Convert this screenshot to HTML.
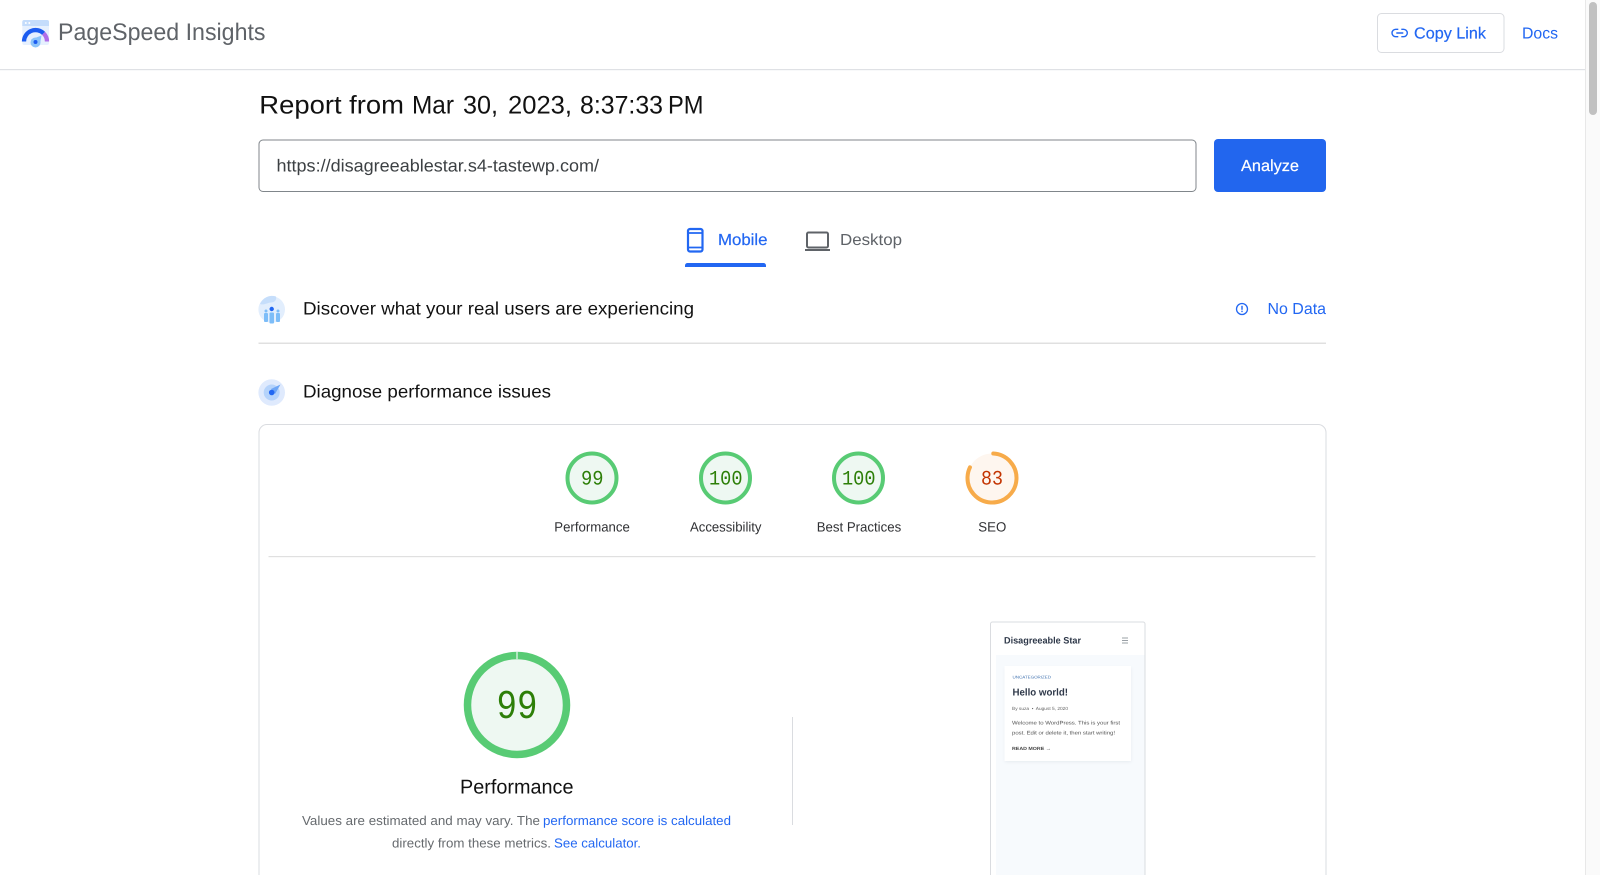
<!DOCTYPE html>
<html lang="en"><head><meta charset="utf-8"><title>PageSpeed Insights</title>
<style>
html,body{margin:0;padding:0;width:1600px;height:875px;overflow:hidden;background:#fff}
svg{display:block;position:absolute;left:0;top:0;filter:blur(.25px)}
text{font-family:"Liberation Sans",sans-serif;white-space:pre}
.m{font-family:"Liberation Mono",monospace}
.b{fill:#2267f2}
.w{stroke:currentColor;stroke-width:.2px}
</style></head><body>
<svg width="1600" height="875" viewBox="0 0 1600 875" xmlns="http://www.w3.org/2000/svg" text-rendering="geometricPrecision">
<defs>
<filter id="s" x="-10%" y="-10%" width="120%" height="120%"><feGaussianBlur stdDeviation="1.500"/></filter>
<filter id="tb" x="-5%" y="-5%" width="110%" height="110%"><feGaussianBlur stdDeviation=".3"/></filter>
</defs>
<!-- scrollbar -->
<rect x="1585" y="0" width="15" height="875" fill="#fafafa"/>
<rect x="1585" y="0" width="1" height="875" fill="#e8e8e8"/>
<rect x="1589" y="2" width="8" height="113" rx="4" fill="#c1c1c1"/>
<!-- header -->
<rect x="0" y="69" width="1585" height="1.200" fill="#dfe1e5"/>
<rect x="22.300" y="20" width="26.700" height="25" rx="2" fill="#e6f0fe"/>
<path d="M22.300 22a2 2 0 0 1 2-2h22.700a2 2 0 0 1 2 2v4H22.300z" fill="#c4dcfb"/>
<circle cx="25.800" cy="23" r="1" fill="#fff"/><circle cx="29.300" cy="23" r="1" fill="#fff"/>
<path d="M24 41.500A11.500 11.500 0 0 1 43.600 33.400" fill="none" stroke="#1c5cf0" stroke-width="4.300"/>
<path d="M43.600 33.400A11.500 11.500 0 0 1 47 41.500" fill="none" stroke="#b06ee8" stroke-width="4.300"/>
<path d="M41.500 35.500L39.800 45 31 39.500z" fill="#8cc4fa"/>
<circle cx="35.500" cy="42.500" r="5" fill="#8cc4fa"/><circle cx="35.500" cy="42" r="2" fill="#1c5cf0"/>
<text x="58" y="40" font-size="24" fill="#5f6368" textLength="207.500" lengthAdjust="spacingAndGlyphs">PageSpeed Insights</text>
<rect x="1377.500" y="13.500" width="126.500" height="39" rx="4" fill="#fff" stroke="#dadce0"/>
<path d="M1398.300 29.300h-2.600a3.700 3.700 0 0 0 0 7.400h2.600M1401.300 29.300h2.300a3.700 3.700 0 0 1 0 7.400h-2.300M1396.300 33h7" fill="none" stroke="#2267f2" stroke-width="1.400"/>
<text class="b w" x="1414" y="38.300" font-size="16" textLength="72" lengthAdjust="spacingAndGlyphs" color="#2267f2">Copy Link</text>
<text class="b" x="1522" y="38.300" font-size="16" textLength="36" lengthAdjust="spacingAndGlyphs">Docs</text>
<!-- title and input -->
<g font-size="25.500" fill="#111">
<text x="259.300" y="113.500" textLength="144.700" lengthAdjust="spacingAndGlyphs">Report from</text>
<text x="412" y="113.500" textLength="42" lengthAdjust="spacingAndGlyphs">Mar</text>
<text x="463" y="113.500" textLength="35" lengthAdjust="spacingAndGlyphs">30,</text>
<text x="508" y="113.500" textLength="64" lengthAdjust="spacingAndGlyphs">2023,</text>
<text x="580" y="113.500" textLength="83" lengthAdjust="spacingAndGlyphs">8:37:33</text>
<text x="668" y="113.500" textLength="35.500" lengthAdjust="spacingAndGlyphs">PM</text>
</g>
<rect x="259" y="140" width="937" height="51.500" rx="4" fill="#fff" stroke="#80868b"/>
<text x="276.500" y="171.500" font-size="17.500" fill="#3c4043" textLength="322.500" lengthAdjust="spacingAndGlyphs">https://disagreeablestar.s4-tastewp.com/</text>
<rect x="1214" y="139" width="112" height="53" rx="4" fill="#2266ee"/>
<text class="w" x="1241" y="171" font-size="16" fill="#fff" color="#fff" textLength="58" lengthAdjust="spacingAndGlyphs">Analyze</text>
<!-- tabs -->
<rect x="688" y="229" width="14.500" height="22.500" rx="2" fill="none" stroke="#2267f2" stroke-width="2.200"/>
<path d="M688 233h14.500M688 247.500h14.500" stroke="#2267f2" stroke-width="1.800"/>
<text class="b w" x="718" y="245" font-size="16" color="#2267f2" textLength="49.500" lengthAdjust="spacingAndGlyphs">Mobile</text>
<path d="M685 267v-1.500a2.500 2.500 0 0 1 2.500-2.500h76a2.500 2.500 0 0 1 2.500 2.500v1.500z" fill="#2267f2"/>
<rect x="807" y="232.500" width="21" height="15" rx="1.500" fill="none" stroke="#5f6368" stroke-width="2"/>
<rect x="805" y="249" width="25" height="2" fill="#5f6368"/>
<text x="840" y="245" font-size="16" fill="#5f6368" textLength="62" lengthAdjust="spacingAndGlyphs">Desktop</text>
<!-- discover -->
<circle cx="271.700" cy="309.500" r="13.300" fill="#e2eefd"/>
<path d="M260 304a13 13 0 0 1 16-7.500c1 4-2 6-5 6s-7 3-11 1.500z" fill="#c6defb"/>
<rect x="264" y="313" width="4" height="9" rx="1" fill="#7dbdf8"/>
<rect x="269.500" y="312.500" width="4.500" height="11" rx="1" fill="#7dbdf8"/>
<rect x="276" y="313" width="4" height="9" rx="1" fill="#7dbdf8"/>
<circle cx="266" cy="311" r="1.500" fill="#7dbdf8"/><circle cx="278" cy="311" r="1.500" fill="#7dbdf8"/>
<circle cx="271.700" cy="309" r="2.200" fill="#2267f2"/>
<text x="303" y="314.500" font-size="18" fill="#111" textLength="391" lengthAdjust="spacingAndGlyphs">Discover what your real users are experiencing</text>
<circle cx="1242" cy="309" r="5.500" fill="none" stroke="#2267f2" stroke-width="1.300"/>
<rect x="1241.300" y="305.800" width="1.400" height="4" fill="#2267f2"/><rect x="1241.300" y="310.700" width="1.400" height="1.400" fill="#2267f2"/>
<text class="b" x="1267.500" y="314" font-size="16" textLength="58.500" lengthAdjust="spacingAndGlyphs">No Data</text>
<rect x="258.500" y="342.500" width="1067.500" height="1.500" fill="#e0e0e0"/>
<!-- diagnose -->
<circle cx="271.700" cy="392.500" r="13.300" fill="#dfeafd"/>
<circle cx="271.700" cy="392.500" r="8" fill="#b5d3fb"/>
<path d="M271 389L280.500 384.500 275 394z" fill="#6ea6f6"/>
<circle cx="271.700" cy="392.500" r="2.800" fill="#2267f2"/>
<text x="303" y="397.500" font-size="18" fill="#111" textLength="248" lengthAdjust="spacingAndGlyphs">Diagnose performance issues</text>
<!-- card -->
<rect x="259" y="424.500" width="1067" height="470" rx="8" fill="#fff" stroke="#dadce0"/>
<rect x="268.500" y="556" width="1047" height="1.200" fill="#e0e0e0"/>
<!-- gauges -->
<g stroke-width="4">
<circle cx="592" cy="478" r="24.500" fill="#eef8f2" stroke="#58cb74"/>
<circle cx="725.500" cy="478" r="24.500" fill="#eef8f2" stroke="#58cb74"/>
<circle cx="858.500" cy="478" r="24.500" fill="#eef8f2" stroke="#58cb74"/>
<circle cx="992" cy="478" r="24.500" fill="#fef6ef"/>
<circle cx="992" cy="478" r="24.500" fill="none" stroke="#f7ab4a" stroke-linecap="round" stroke-dasharray="125 200" transform="rotate(-87 992 478)"/>
</g>
<g font-size="20.500" fill="#2d7f08">
<text class="m" x="581" y="484.500" textLength="22.500" lengthAdjust="spacingAndGlyphs">99</text>
<text class="m" x="709" y="484.500" textLength="33.500" lengthAdjust="spacingAndGlyphs">100</text>
<text class="m" x="842" y="484.500" textLength="33.500" lengthAdjust="spacingAndGlyphs">100</text>
<text class="m" x="981" y="484.500" fill="#c33300" textLength="22" lengthAdjust="spacingAndGlyphs">83</text>
</g>
<g font-size="13.500" fill="#303134">
<text x="554.300" y="531.300" textLength="75.500" lengthAdjust="spacingAndGlyphs">Performance</text>
<text x="690" y="531.300" textLength="71.500" lengthAdjust="spacingAndGlyphs">Accessibility</text>
<text x="816.700" y="531.300" textLength="84.500" lengthAdjust="spacingAndGlyphs">Best Practices</text>
<text x="978.300" y="531.300" textLength="28" lengthAdjust="spacingAndGlyphs">SEO</text>
</g>
<!-- big gauge -->
<circle cx="517" cy="705" r="49.500" fill="#eef8f2" stroke="#58cb74" stroke-width="7.500"/>
<rect x="516.400" y="651" width="1.200" height="8" fill="#eef8f2"/>
<text class="m" x="496.500" y="718" font-size="41" fill="#2d7f08" textLength="41" lengthAdjust="spacingAndGlyphs">99</text>
<text x="460" y="793.500" font-size="20" fill="#111" textLength="113.500" lengthAdjust="spacingAndGlyphs">Performance</text>
<g font-size="13">
<text x="302" y="825" fill="#666a6e" textLength="238" lengthAdjust="spacingAndGlyphs">Values are estimated and may vary. The</text>
<text class="b" x="543" y="825" textLength="188" lengthAdjust="spacingAndGlyphs">performance score is calculated</text>
<text x="392" y="847.300" fill="#666a6e" textLength="159" lengthAdjust="spacingAndGlyphs">directly from these metrics.</text>
<text class="b" x="554" y="847.300" textLength="87" lengthAdjust="spacingAndGlyphs">See calculator.</text>
</g>
<rect x="792" y="717" width="1" height="108" fill="#dadce0"/>
<!-- thumbnail -->
<rect x="990.500" y="622" width="154.500" height="270" rx="2" fill="#fff" stroke="#dadce0"/>
<rect x="996" y="655" width="148.500" height="220" fill="#f7fafd"/>
<rect x="1005" y="668" width="126" height="94" fill="#e6ebf0" filter="url(#s)"/>
<rect x="1004.500" y="666" width="126.500" height="95" fill="#fff"/>
<g filter="url(#tb)">
<text x="1004" y="643.500" font-size="9.300" font-weight="700" fill="#2d3748" textLength="77" lengthAdjust="spacingAndGlyphs">Disagreeable Star</text>
<path d="M1122 638h6M1122 640.500h6M1122 643h6" stroke="#9aa0a6" stroke-width="1"/>
<text x="1012.500" y="678.500" font-size="4" fill="#3d6fae" textLength="38.500" lengthAdjust="spacingAndGlyphs">UNCATEGORIZED</text>
<text x="1012.500" y="695.500" font-size="10" font-weight="700" fill="#2d3748" textLength="55.500" lengthAdjust="spacingAndGlyphs">Hello world!</text>
<text x="1012" y="710" font-size="4.500" fill="#666" textLength="56" lengthAdjust="spacingAndGlyphs">By suza  •  August 5, 2020</text>
<text x="1012" y="724.500" font-size="5.200" fill="#555" textLength="108" lengthAdjust="spacingAndGlyphs">Welcome to WordPress. This is your first</text>
<text x="1012" y="734.500" font-size="5.200" fill="#555" textLength="103" lengthAdjust="spacingAndGlyphs">post. Edit or delete it, then start writing!</text>
<text x="1012" y="750" font-size="4.500" font-weight="700" fill="#444" textLength="39" lengthAdjust="spacingAndGlyphs">READ MORE →</text>
</g>
</svg>
</body></html>
